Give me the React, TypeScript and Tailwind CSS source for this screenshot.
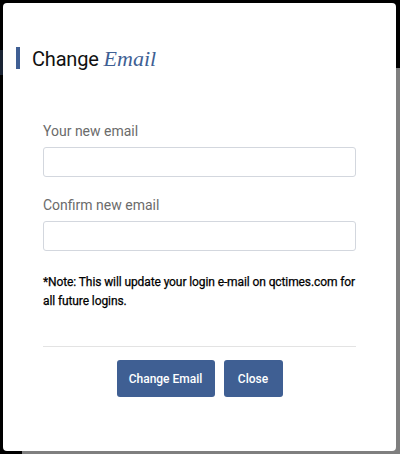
export default function App() {
  return (
    <div className="relative w-[400px] h-[454px] bg-black overflow-hidden" style={{ fontFamily: "Roboto, 'Liberation Sans', sans-serif" }}>
      <div className="absolute left-[22px] top-[68px] right-0 bottom-0 bg-[#7f7f7f]" />
      <div className="absolute left-0 top-[50px] w-[3px] h-[25px] bg-[#1a2333]" />
      <div className="relative ml-[3px] mt-[3px] w-[393px] h-[448px] bg-white rounded-[4px] flex flex-col">
        <div className="flex items-center mt-[44px] ml-[13px] h-[22px]">
          <div className="w-[4px] h-[22px] bg-[#3f5f94]" />
          <div className="ml-[12px] flex items-baseline">
            <span className="text-[20px] text-[#111] tracking-[-0.2px]">Change</span>
            <span className="ml-[5px] text-[22px] italic text-[#3f5f94]" style={{ fontFamily: "'Liberation Serif', serif" }}>Email</span>
          </div>
        </div>
        <div className="mx-[40px] mt-[52px] flex flex-col">
          <label className="text-[14px] text-[#6b6b6b] leading-[20px]">Your new email</label>
          <input className="mt-[6px] h-[30px] w-full border border-[#d3d7de] rounded-[3px]" />
          <label className="mt-[18px] text-[14px] text-[#6b6b6b] leading-[20px]">Confirm new email</label>
          <input className="mt-[6px] h-[30px] w-full border border-[#d3d7de] rounded-[3px]" />
          <p className="mt-[22px] text-[12px] font-normal text-[#000] leading-[19px] tracking-[-0.1px] [-webkit-text-stroke:0.25px_#000]">*Note: This will update your login e-mail on qctimes.com for all future logins.</p>
          <div className="mt-[35px] h-px bg-[#e3e3e3]" />
          <div className="mt-[13px] flex justify-center gap-[9px]">
            <button className="h-[37px] w-[98px] bg-[#3f5f93] text-white text-[12px] font-medium rounded-[3px]">Change Email</button>
            <button className="h-[37px] w-[59px] bg-[#3f5f93] text-white text-[12px] font-medium rounded-[3px]">Close</button>
          </div>
        </div>
      </div>
    </div>
  );
}
